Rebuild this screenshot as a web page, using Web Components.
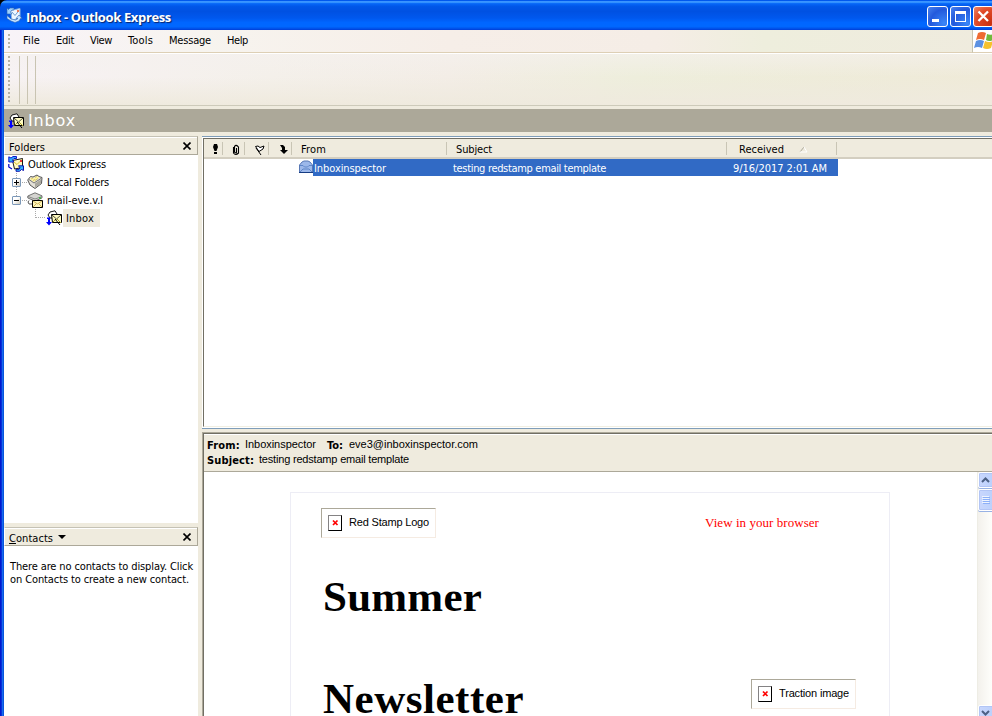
<!DOCTYPE html>
<html lang="en">
<head>
<meta charset="utf-8">
<title>Inbox - Outlook Express</title>
<style>
html,body{margin:0;height:100%;overflow:hidden}
body{font:11px/13px "DejaVu Sans Condensed","DejaVu Sans",sans-serif;color:#000;background:#fff}
</style>
</head>
<body>
<mail-window></mail-window>

<template id="mail-window">
<style>
:host{display:grid;grid-template-rows:30px minmax(0,1fr);width:992px;height:716px;overflow:hidden;background:#000}
.frame{display:grid;grid-template-rows:24px 55px 23px minmax(0,1fr);min-height:0;padding-left:4px;background:linear-gradient(90deg,#0019cf 0 1px,#0831d9 1px 2px,#166aee 2px 3px,#0855dd 3px 4px) left/4px 100% no-repeat,#efebde}
.body{display:grid;grid-template-columns:194px minmax(0,1fr);column-gap:4px;padding-top:4px;min-height:0}
.left{display:grid;grid-template-rows:387px minmax(0,1fr);row-gap:4px;min-height:0}
.right{display:grid;grid-template-rows:293px minmax(0,1fr);row-gap:3px;min-height:0}
</style>
<title-bar></title-bar>
<div class="frame">
  <menu-bar></menu-bar>
  <tool-bar></tool-bar>
  <folder-banner></folder-banner>
  <div class="body">
    <div class="left">
      <side-panel><fit-text slot="title" w="36">Folders</fit-text><folder-tree></folder-tree></side-panel>
      <side-panel class="contacts" menu><fit-text slot="title" w="44"><u>C</u>ontacts</fit-text><contact-note></contact-note></side-panel>
    </div>
    <div class="right"><message-list></message-list><preview-pane></preview-pane></div>
  </div>
</div>
</template>

<template id="title-bar">
<style>
:host{display:flex;align-items:center;box-sizing:border-box;height:30px;padding:3px 0 0 6px;border-top-left-radius:7px;
background:linear-gradient(#0058ee 0,#0058ee 3%,#3c95ff 4%,#3090ff 9%,#0667f8 12%,#0056e8 22%,#0051e2 38%,#0058ee 60%,#0066ff 75%,#0068ff 88%,#0057ee 94%,#003dd7 100%)}
.cap{font:bold 13px/18px "Open Sans","Noto Sans",sans-serif;color:#fff;text-shadow:1px 1px 1px #0a246a;margin-left:4px;flex:1}
.b{box-sizing:border-box;width:21px;height:21px;border:1px solid #fff;border-radius:3px;background:radial-gradient(circle at 85% 85%,#3a86f8,#2359dc 60%,#4a84f0);margin-right:2px;flex:none}
.c{background:radial-gradient(circle at 85% 85%,#c93010,#e04a28 60%,#f08868);margin-right:-2px}
svg{display:block;flex:none}
</style>
<svg width="16" height="16" viewBox="0 0 16 16" style="margin-top:-3px"><path d="M4.500 3.500 14 1.500v9.500L6 13.500Z" fill="#eef6ff" stroke="#8cb4e0"/><path d="m6 5 3 3.500 4-5" fill="none" stroke="#6e9dd0"/><path d="M11 3h2v2h-2z" fill="#ef7953"/><path d="M8 1H4L2.500 2.500 1 1v6h5L4.500 5 6 3h2z" fill="#9cd0ff" stroke="#2a62b0" stroke-width=".6"/><path d="M1 8.500v3L5 14l4 1.500 4-1.500 1.500-2.500H16L13 8l-3 3.500h2L9.500 13 5 12z" fill="#c8e4ff" stroke="#2a62b0" stroke-width=".6"/></svg>
<div class="cap"><fit-text w="145">Inbox - Outlook Express</fit-text></div>
<div class="b"><svg width="19" height="19"><path d="M4 12h7v3H4z" fill="#fff"/></svg></div>
<div class="b"><svg width="19" height="19"><path d="M4 4h11v11H4zM5 7v7h9V7z" fill="#fff" fill-rule="evenodd"/></svg></div>
<div class="b c"><svg width="19" height="19"><path d="m4.500 4.500 9.500 9.500m0-9.500-9.500 9.500" stroke="#fff" stroke-width="2.300"/></svg></div>
</template>

<template id="menu-bar">
<style>
:host{display:flex;align-items:stretch;box-sizing:border-box;height:24px;border-bottom:1px solid #fff;background:linear-gradient(90deg,#f8f3f8 0,#f7f4ef 20%,#f6eee8 45%,#f5ede6 66%,#eeeedd 77%,#efebde 100%)}
.in{display:flex;flex:1;padding-top:4px;border-bottom:1px solid #ddcfb5;border-right:1px solid #c8c4b0}
.grip{width:2px;height:16px;margin:0 13px 0 4px;background:repeating-linear-gradient(#b8b4a6 0 2px,transparent 2px 4px)}
.it{margin-right:16px}
.flag{width:19px;background:#fff;border-bottom:1px solid #ddcfb5;overflow:hidden}
svg{display:block}
</style>
<div class="in"><div class="grip"></div>
<fit-text class="it" w="17">File</fit-text><fit-text class="it" w="18">Edit</fit-text><fit-text class="it" w="22">View</fit-text><fit-text class="it" w="25">Tools</fit-text><fit-text class="it" w="42">Message</fit-text><fit-text class="it" w="21">Help</fit-text></div>
<div class="flag"><svg width="24" height="22"><path d="M5 3q4-2 8 0l-2 7q-4-2-8 0z" fill="#ef6b32"/><path d="M14 4q4 2 8-1l-2 7q-4 2-7 0z" fill="#72b93b"/><path d="M3 11q4-2 8 0l-2 7q-4-2-8 0z" fill="#5c91e2"/><path d="M12 11q4 2 8 0l-2 7q-4 2-8 0z" fill="#f6c12d"/></svg></div>
</template>

<template id="tool-bar">
<style>
:host{display:flex;box-sizing:border-box;height:52px;border-bottom:1px solid #cdcaba;margin-bottom:3px;padding:2px 0 0 4px;background:linear-gradient(#f5f1ef99 0,#f4ede600 45%,#efeade 100%),linear-gradient(90deg,#f7f2f4 0,#f4f0ea 27%,#f3ede6 45%,#eeeedc 64%,#efead8 100%)}
.grip{width:2px;height:48px;margin-right:9px;background:repeating-linear-gradient(#b4b0a3 0 2px,transparent 2px 4px)}
i{width:1px;height:48px;background:#c9c4b2;margin-right:7px}
</style>
<div class="grip"></div><i></i><i></i><i></i>
</template>

<template id="folder-banner">
<style>
:host{display:flex;align-items:center;height:23px;padding-left:4px;background:#aca899;color:#fff;font:16px/22px "DejaVu Sans",sans-serif}
fit-text{margin:1px 0 0 4px}
</style>
<pix-icon name="inbox"></pix-icon><fit-text w="48">Inbox</fit-text>
</template>

<template id="side-panel">
<style>
:host{display:grid;grid-template-rows:19px minmax(0,1fr);min-height:0;background:#fff}
header{display:flex;align-items:center;box-sizing:border-box;padding:3px 6px 0 4px;background:#efebde;border:1px solid #fff;border-right-color:#aca899;border-bottom-color:#aca899;border-top-color:#c5c2b5;box-shadow:inset 0 1px #fff}
.m{width:0;border:4px solid transparent;border-top-color:#000;border-bottom:0;margin:-2px 0 0 5px}
.x{margin:-2px 0 0 auto;display:block}
</style>
<header><slot name="title"></slot><span class="m"></span><svg class="x" width="8" height="8"><path d="m.5.500 7 7m0-7-7 7" stroke="#000" stroke-width="1.600"/></svg></header>
<slot></slot>
</template>

<template id="folder-tree">
<style>
:host{display:block}
.r{display:flex;align-items:center;height:18px}
.root{padding-left:4px}.one{padding-left:8px;background:repeating-linear-gradient(#aaa 0 1px,transparent 1px 2px) 12px 0/1px 18px no-repeat}.last{background-size:1px 9px}.two{padding-left:31px}
.box{box-sizing:border-box;width:9px;height:9px;border:1px solid #7c98b8;border-radius:1px;background:linear-gradient(135deg,#fff 40%,#cfcabb);flex:none}
.box svg{display:block}
.d{width:5px;height:1px;margin:0 0 0 1px;background:repeating-linear-gradient(90deg,#aaa 0 1px,transparent 1px 2px);flex:none}
.l{width:10px;height:9px;box-sizing:border-box;border:1px dotted #aaa;border-width:0 0 1px 1px;margin:-9px 1px 0 0}
fit-text{margin-left:4px}
.sel{display:flex;align-items:center;height:18px;background:#efebde;padding:0 6px 0 3px;margin-left:1px}
.sel fit-text{margin-left:0}
</style>
<div class="r root"><pix-icon name="oe"></pix-icon><fit-text w="78">Outlook Express</fit-text></div>
<div class="r one"><span class="box"><svg width="7" height="7"><path d="M1 3h5v1H1zM3 1h1v5H3z"/></svg></span><span class="d"></span><pix-icon name="local"></pix-icon><fit-text w="62">Local Folders</fit-text></div>
<div class="r one last"><span class="box"><svg width="7" height="7"><path d="M1 3h5v1H1z"/></svg></span><span class="d"></span><pix-icon name="server"></pix-icon><fit-text w="56">mail-eve.v.l</fit-text></div>
<div class="r two"><span class="l"></span><pix-icon name="inbox"></pix-icon><span class="sel"><fit-text w="28">Inbox</fit-text></span></div>
</template>

<template id="contact-note">
<style>:host{display:flex;flex-direction:column;align-items:flex-start;padding:14px 0 0 6px}</style>
<fit-text w="183">There are no contacts to display. Click</fit-text><fit-text w="179">on Contacts to create a new contact.</fit-text>
</template>

<template id="message-list">
<style>
:host{display:block;box-sizing:border-box;border-top:1px solid #7f9db9;border-bottom:1px solid #7f9db9;background:#fff;padding:1px 0}
.in{box-sizing:border-box;height:100%;border:1px solid #716f64;border-right:0;border-bottom:1px solid #f1efe2;margin-left:1px}
.h{display:grid;grid-template-columns:19px 22px 24px 23px 155px 280px 110px 1fr;height:20px;box-sizing:border-box;background:#efebde;border-bottom:2px solid #d3cec0}
.h>*{display:flex;align-items:center;padding:3px 0 0 9px}
.h>:not(:last-child){background:linear-gradient(#c9c5b5,#c9c5b5) right 50%/1px 13px no-repeat}
.h>.ic{justify-content:flex-start}
.row{display:grid;grid-template-columns:94px 1fr;height:17px}
.cells{display:flex}
.sel{display:flex;align-items:center;box-sizing:border-box;width:525px;height:17px;background:#316ac5;color:#fff;padding:2px 0 0 1px}
</style>
<div class="in"><div class="h">
<span class="ic"><svg width="5" height="11"><path d="M1 0h3l1 3-1.500 4h-2L0 3zM1 8h3v2H1z"/></svg></span>
<span class="ic"><svg width="8" height="12"><path d="M1.500 3v6q2 3 5 0V3Q4 0 2.500 2.500V8q2 2 2 0V4" fill="none" stroke="#000" stroke-width="1.100"/></svg></span>
<span class="ic"><svg width="11" height="10"><path d="M1.500 1.500 4 1l2 1.500L10 1 9 4 5 6.500z" fill="#fff" stroke="#000"/><path d="m2 3 5 7" stroke="#000"/></svg></span>
<span class="ic" style="padding-left:10px"><svg width="9" height="10"><path d="M1 0h3l2 2v3h3L5 9 1 5h2V3z"/></svg></span>
<span><fit-text w="25">From</fit-text></span><span><fit-text w="36">Subject</fit-text></span><span style="padding-left:12px"><fit-text w="45">Received</fit-text><svg width="9" height="7" style="margin-left:15px"><path d="m1 6 4-5" stroke="#aca899"/><path d="m5 1 3 5H1" fill="none" stroke="#fff"/></svg></span><span></span>
</div>
<div class="row"><span></span><span class="cells"><svg width="14" height="14" viewBox="0 0 14 14" style="margin:1px 0 0 1px"><path d="M.5 5 3 2l2-1h4l2 1 2.500 3v7.500H.5z" fill="#9cb8ea" stroke="#5878b5"/><path d="M1 5.500h3L5.500 7h3L10 5.500h3M1 12l3-3h6l3 3" stroke="#5f86c8" fill="none"/><path d="M0 12.500h14" stroke="#153b82"/></svg>
<span class="sel"><fit-text w="72">Inboxinspector</fit-text><fit-text w="153" style="margin-left:67px">testing redstamp email template</fit-text><fit-text w="94" style="margin-left:127px">9/16/2017 2:01 AM</fit-text></span></span></div>
</div>
</template>

<template id="preview-pane">
<style>
:host{display:grid;grid-template-rows:38px minmax(0,1fr);box-sizing:border-box;min-height:0;border-top:1px solid #aca899;border-left:1px solid #aca899;box-shadow:inset 1px 1px #716f64;padding:1px 0 0 1px;background:#fff}
header{box-sizing:border-box;background:#efebde;border-bottom:1px solid #aca899;border-top:1px solid #fff;padding:3px 0 0 3px;font-size:11px}
.ln{display:flex;height:15px;line-height:13px;font-family:"Liberation Sans",sans-serif}
b{font-family:"DejaVu Sans Condensed",sans-serif;padding-top:1px}
.v{display:grid;grid-template-columns:1fr 15px;min-height:0}
.doc{padding:20px 87px 0 86px;overflow:hidden}
.mail{box-sizing:border-box;width:600px;height:400px;border:1px solid #ededf5;padding:15px 33px 0 30px}
.top{display:flex;justify-content:space-between;height:64px}
.red{font:13px/16px "Liberation Serif",serif;color:#f00;margin:7px 37px 0 0}
h1{margin:0;font:bold 43px/50px "Liberation Serif",serif;height:102px;padding-left:2px}
.two{display:flex;justify-content:space-between}
.two h1{height:50px}
</style>
<header><div class="ln"><b><fit-text w="33">From:</fit-text></b><fit-text w="71" style="margin-left:5px">Inboxinspector</fit-text><b style="margin-left:11px"><fit-text w="16">To:</fit-text></b><fit-text w="129" style="margin-left:6px">eve3@inboxinspector.com</fit-text></div>
<div class="ln"><b><fit-text w="47">Subject:</fit-text></b><fit-text w="150" style="margin-left:5px">testing redstamp email template</fit-text></div></header>
<div class="v"><div class="doc"><div class="mail">
<div class="top"><broken-image style="width:115px"><fit-text w="80">Red Stamp Logo</fit-text></broken-image><span class="red"><fit-text w="114">View in your browser</fit-text></span></div>
<h1><fit-text w="159">Summer</fit-text></h1>
<div class="two"><h1><fit-text w="201">Newsletter</fit-text></h1><broken-image style="width:105px;margin-top:5px"><fit-text w="70">Traction image</fit-text></broken-image></div>
</div></div><scroll-bar></scroll-bar></div>
</template>

<template id="broken-image">
<style>
:host{display:flex;align-items:center;box-sizing:border-box;height:30px;padding-left:6px;border:1px solid #aca899;border-right-color:#f5ebe2;border-bottom-color:#f5ebe2;font:11px/13px "Liberation Sans",sans-serif;flex:none}
.i{box-sizing:border-box;width:14px;height:16px;border:1px solid #848284;border-right-color:#000;border-bottom-color:#000;margin-right:7px;flex:none}
svg{display:block}.t{margin-top:-1px}
</style>
<span class="i"><svg width="12" height="13"><path d="m4 4.500 4.500 4.500m0-4.500L4 9" stroke="#f00" stroke-width="1.700"/></svg></span><span class="t"><slot></slot></span>
</template>

<template id="scroll-bar">
<style>
:host{display:flex;flex-direction:column;align-items:flex-start;box-sizing:border-box;padding:0;border-left:1px solid #eeede5;background:linear-gradient(90deg,#f3f1ec,#fefefb);overflow:hidden;gap:1px}
.k{box-sizing:border-box;width:17px;flex:none;border:1px solid #fff;border-radius:2px;background:linear-gradient(90deg,#c9d7fd,#bad0fc);box-shadow:inset 0 0 0 1px #b2c5f5,0 1px #98b2e4}
svg{display:block}
</style>
<div class="k" style="height:16px"><svg width="13" height="14"><path d="m3 9 3.500-3.500L10 9" fill="none" stroke="#4d6185" stroke-width="2"/></svg></div>
<div class="k" style="height:22px"><svg width="13" height="19"><path d="M3 6.500h7m-7 2h7m-7 2h7m-7 2h7" stroke="#eef4fe"/><path d="M4 7.500h7m-7 2h7m-7 2h7m-7 2h7" stroke="#8cb0f8"/></svg></div>
<div class="k" style="height:17px;margin-top:auto;margin-bottom:-6px"><svg width="13" height="14"><path d="m3 5 3.500 3.500L10 5" fill="none" stroke="#4d6185" stroke-width="2"/></svg></div>
</template>

<script>
class ShadowPart extends HTMLElement {
  constructor() {
    super();
    this.attachShadow({mode: "open"});
    const t = document.getElementById(this.localName);
    if (t) this.shadowRoot.append(t.content.cloneNode(true));
  }
}

class SidePanel extends ShadowPart {
  connectedCallback() {
    if (!this.hasAttribute("menu")) this.shadowRoot.querySelector(".m").remove();
  }
}

/* 16px folder and application icons, selected by name */
const ICONS = {
  inbox: '<path d="M2 5 4 2 9 .8 11 4v4H4z" fill="#fff" stroke="#000" stroke-width=".9"/><path d="M5.500 4.500h10v8h-9z" fill="#fffbc0" stroke="#000"/><path d="m6 5 4.500 4L15 5" stroke="#000" fill="none" stroke-width=".7"/><path d="m7 12 3-3m1 0 4 4" stroke="#a99d20" fill="none"/><path d="m9 9 5 6" stroke="#000"/><path d="M1 7.500h3V12h2l-3 3.500L0 12h2V9H1z" fill="#00f"/>',
  oe: '<path d="M4.500 4.500 14.500 2.500v9l-8 1.500z" fill="#fff8c0" stroke="#000" stroke-width=".9"/><path d="m5.500 5.500 3.500 3 5-5" fill="none" stroke="#d8c030"/><path d="M12 4h2v2h-2z" fill="#e33"/><path d="M8.500.5H5L3 2 .8.800V6h5L4.500 4 6 2.500h2.500z" fill="#31b0ff" stroke="#0000c6" stroke-width=".9"/><path d="M.8 8v3L4 13" fill="none" stroke="#0000c6" stroke-width="1.200"/><path d="M8 15.300h3.500l2-1.800 2 1V9.800h-5l1.500 2-1 1.500H8z" fill="#31b0ff" stroke="#0000a5" stroke-width=".9"/>',
  local: '<path d="M.7 6 3.500 2.500 6 3l4-2 2 1.500 3 1-.5 6L8 14.500 3 11z" fill="#e4e1d8" stroke="#444" stroke-width=".9"/><path d="M2 5.500 7 9l7-4.500" fill="none" stroke="#777"/><path d="m3 5 1-1.500 2.500 1L9.500 2l3 1.500L7 8z" fill="#fff39c"/><path d="m4 5 2-1m0 2.500 2-1m0-2 2-1m-2 4 3-2" stroke="#b8a850" stroke-width=".6"/><path d="m8 9.500 6-4v4l-6 4z" fill="#aaa89f"/>',
  server: '<path d="M.8 4 8 .8l7 3V6L8 9 .8 6z" fill="#d4d4d0" stroke="#555" stroke-width=".8"/><path d="m1 4.500 7 2.500 7-2.500" fill="none" stroke="#888"/><path d="M12 5.500h2v1h-2z" fill="#0c0"/><path d="M2 8.500 1 10l1 2h3" fill="none" stroke="#555"/><path d="M5.500 8.500h10v7h-10z" fill="#fff7bd" stroke="#000"/><path d="m6 9 4.500 3L15 9M6 15l3-3m6 3-3-3" fill="none" stroke="#be9c38" stroke-width=".8"/>'
};
class PixIcon extends HTMLElement {
  connectedCallback() {
    if (this.shadowRoot) return;
    this.attachShadow({mode: "open"}).innerHTML =
      '<style>:host{display:block;width:16px;height:16px;flex:none}svg{display:block}</style>' +
      '<svg width="16" height="16" viewBox="0 0 16 16">' + ICONS[this.getAttribute("name")] + '</svg>';
  }
}

/* A single-line label whose tracking is set so that it spans `w` pixels */
class FitText extends HTMLElement {
  connectedCallback() {
    if (this.shadowRoot) return;
    this.attachShadow({mode: "open"}).innerHTML = '<style>:host{display:inline-block;white-space:nowrap;flex:none}</style><slot></slot>';
    const n = this.textContent.length;
    const w = this.getBoundingClientRect().width;
    this.style.letterSpacing = ((+this.getAttribute("w") - w) / n).toFixed(3) + "px";
  }
}

customElements.define("mail-window", class extends ShadowPart {});
for (const name of ["title-bar", "menu-bar", "tool-bar", "folder-banner", "folder-tree", "contact-note", "message-list", "preview-pane", "broken-image", "scroll-bar"])
  customElements.define(name, class extends ShadowPart {});
customElements.define("side-panel", SidePanel);
customElements.define("pix-icon", PixIcon);
customElements.define("fit-text", FitText);
</script>
</body>
</html>
